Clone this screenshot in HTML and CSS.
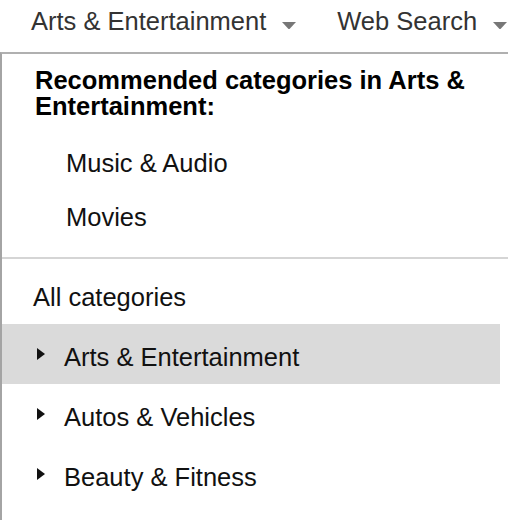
FILE: index.html
```html
<!DOCTYPE html>
<html lang="en">
<head>
    <meta charset="UTF-8">
    <meta name="viewport" content="width=device-width, initial-scale=1.0">
    <title>Category picker</title>
    <link rel="stylesheet" href="styles.css">
</head>
<body>
    <!-- Barra de filtros -->
    <div class="topbar">
        <div class="filtro">
            <span>Arts &amp; Entertainment</span>
            <svg class="caret" width="14" height="7" viewBox="0 0 14 7"><polygon points="0,0 14,0 7.5,7 6.5,7" /></svg>
        </div>
        <div class="filtro">
            <span>Web Search</span>
            <svg class="caret" width="14" height="7" viewBox="0 0 14 7"><polygon points="0,0 14,0 7.5,7 6.5,7" /></svg>
        </div>
    </div>

    <div class="painel">
        <!-- Categorias recomendadas -->
        <div class="recomendadas">
            <div class="rec-titulo">Recommended categories in Arts &amp; Entertainment:</div>
            <ul class="rec-lista">
                <li>Music &amp; Audio</li>
                <li>Movies</li>
            </ul>
        </div>

        <!-- Todas as categorias -->
        <div class="todas">
            <div class="todas-titulo">All categories</div>
            <ul class="cat-lista">
                <li class="cat ativo">
                    <svg class="seta" width="8" height="12" viewBox="0 0 8 12"><polygon points="0,0 8,6 0,12" /></svg>
                    <span>Arts &amp; Entertainment</span>
                </li>
                <li class="cat">
                    <svg class="seta" width="8" height="12" viewBox="0 0 8 12"><polygon points="0,0 8,6 0,12" /></svg>
                    <span>Autos &amp; Vehicles</span>
                </li>
                <li class="cat">
                    <svg class="seta" width="8" height="12" viewBox="0 0 8 12"><polygon points="0,0 8,6 0,12" /></svg>
                    <span>Beauty &amp; Fitness</span>
                </li>
            </ul>
        </div>
    </div>
</body>
</html>
```

FILE: styles.css
```css
/* Estilo geral */
body {
    margin: 0;
    font-family: "Liberation Sans", Arial, Helvetica, sans-serif;
    font-size: 25.5px;
    color: #111;
    background-color: #fff;
}

ul {
    list-style: none;
    margin: 0;
    padding: 0;
}

/* Barra superior */
.topbar {
    display: flex;
    gap: 41px;
    height: 52px;
    box-sizing: border-box;
    padding: 6px 0 0 31px;
    line-height: 30px;
    color: #333;
}

.filtro {
    display: flex;
    align-items: flex-start;
    gap: 16px;
}

.caret {
    display: block;
    margin-top: 16px;
    fill: #777;
}

/* Painel */
.painel {
    min-height: 466px;
    border-top: 2px solid #b0b0b0;
    border-left: 2px solid #a4a4a4;
}

.recomendadas {
    padding: 13px 0 25px 0;
}

.rec-titulo {
    margin-left: 33px;
    font-weight: bold;
    line-height: 26px;
    color: #000;
}

.rec-lista {
    display: flex;
    flex-direction: column;
    gap: 24px;
    margin-top: 29px;
    padding-left: 64px;
    line-height: 30px;
}

.todas {
    border-top: 2px solid #d5d5d5;
}

.todas-titulo {
    margin: 23px 0 12px 31px;
    line-height: 30px;
}

.cat {
    display: flex;
    align-items: flex-start;
    gap: 19px;
    height: 60px;
    box-sizing: border-box;
    margin-right: 8px;
    padding: 18px 0 0 35px;
    line-height: 30px;
}

.cat.ativo {
    background-color: #dadada;
}

.seta {
    display: block;
    margin-top: 6px;
    fill: #111;
}
```
